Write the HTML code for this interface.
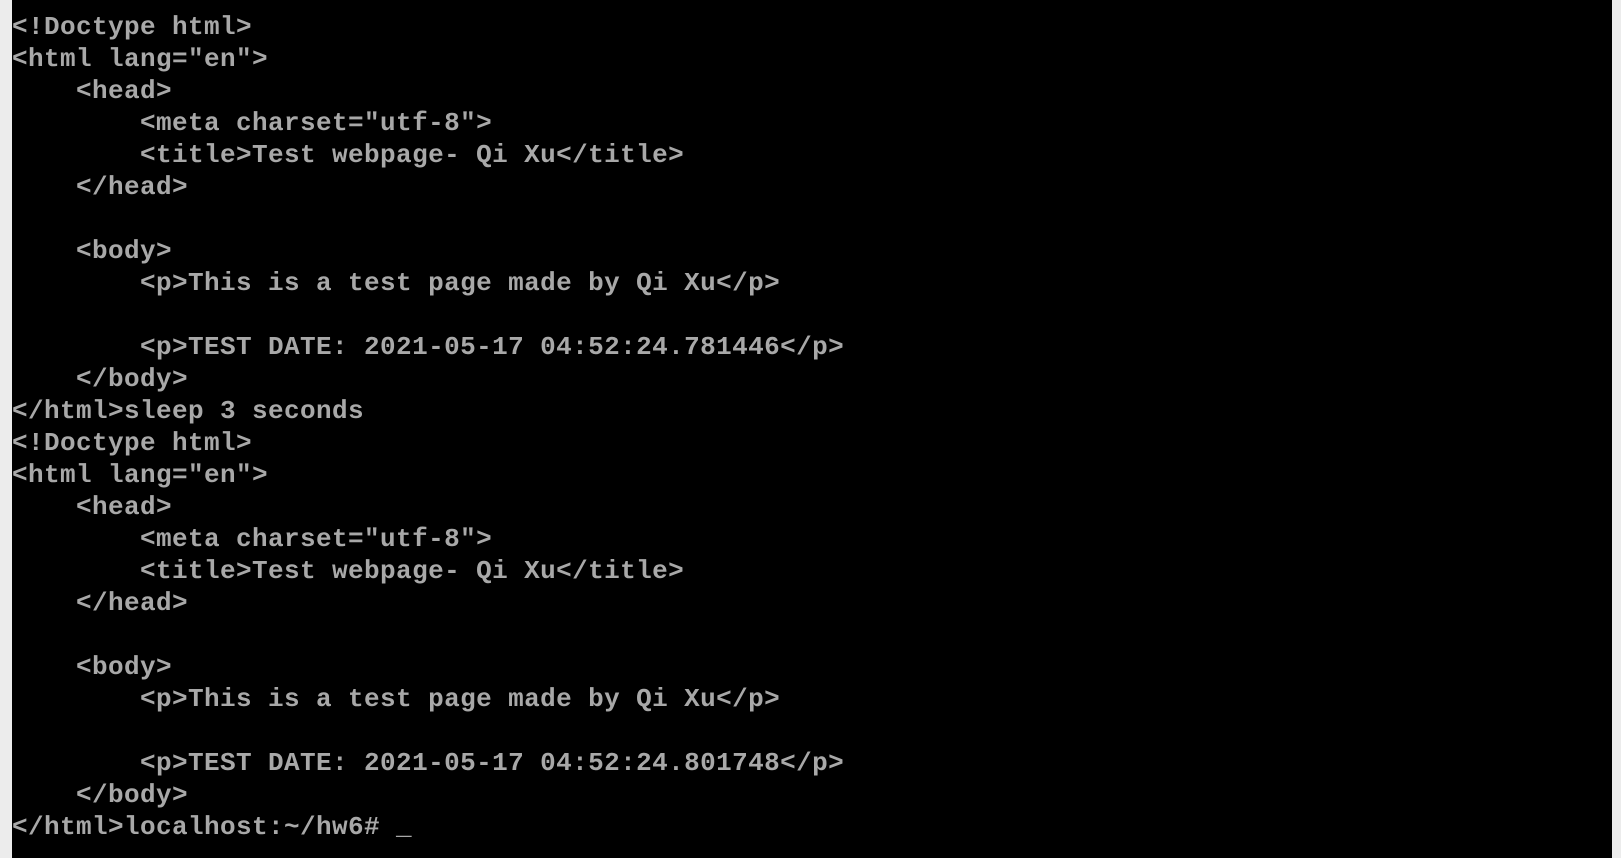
<!DOCTYPE html>
<html><head><meta charset="utf-8"><style>
html,body{margin:0;padding:0;background:#ececec;width:1621px;height:858px;overflow:hidden}
.t{position:absolute;left:12px;top:0;width:1600px;height:858px;background:#000}
pre{position:absolute;left:12px;top:11px;margin:0;font-family:"Liberation Mono",monospace;font-size:26px;letter-spacing:0.4px;line-height:32px;color:#a8a8a8;font-weight:bold}
</style></head><body><div class="t"></div><pre>&lt;!Doctype html&gt;
&lt;html lang="en"&gt;
    &lt;head&gt;
        &lt;meta charset="utf-8"&gt;
        &lt;title&gt;Test webpage- Qi Xu&lt;/title&gt;
    &lt;/head&gt;

    &lt;body&gt;
        &lt;p&gt;This is a test page made by Qi Xu&lt;/p&gt;

        &lt;p&gt;TEST DATE: 2021-05-17 04:52:24.781446&lt;/p&gt;
    &lt;/body&gt;
&lt;/html&gt;sleep 3 seconds
&lt;!Doctype html&gt;
&lt;html lang="en"&gt;
    &lt;head&gt;
        &lt;meta charset="utf-8"&gt;
        &lt;title&gt;Test webpage- Qi Xu&lt;/title&gt;
    &lt;/head&gt;

    &lt;body&gt;
        &lt;p&gt;This is a test page made by Qi Xu&lt;/p&gt;

        &lt;p&gt;TEST DATE: 2021-05-17 04:52:24.801748&lt;/p&gt;
    &lt;/body&gt;
&lt;/html&gt;localhost:~/hw6# _</pre></body></html>
